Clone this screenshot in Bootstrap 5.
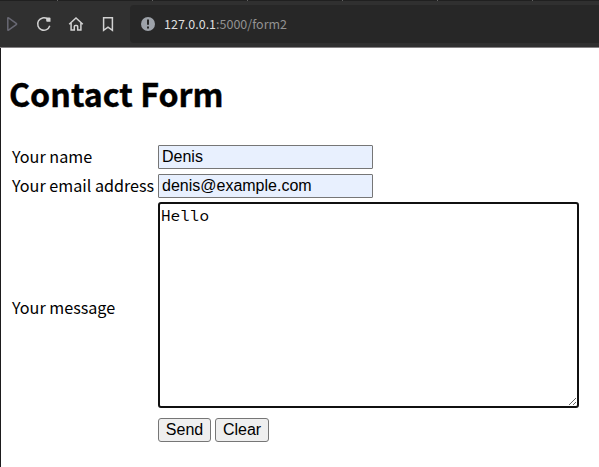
<!DOCTYPE html>
<html lang="en">
<head>
<meta charset="utf-8">
<meta name="viewport" content="width=device-width, initial-scale=1">
<title>Contact Form</title>
<link href="https://cdn.jsdelivr.net/npm/bootstrap@5.3.0/dist/css/bootstrap.min.css" rel="stylesheet">
<style>
body{font:16.15px/24px "Noto Sans CJK SC","Noto Sans",sans-serif;color:#000;background:#fff;height:467px;overflow:hidden}
.tabstrip{height:1px;background:repeating-linear-gradient(90deg,#202020 0 57px,#606060 57px 58px,#202020 58px 95px)}
.toolbar{height:47px;background:#303030;border-bottom:1px solid #858284;padding-left:4px}
.tool{width:16px;height:16px;fill:none;stroke:#d2d2d2;stroke-width:1.5;margin-right:16px;flex:none}
.tool.dim{stroke:#686873}
.address{height:38px;background:#272727;border-radius:4px 0 0 4px;font-size:12.5px;line-height:20px;color:#929292;padding-left:10px;margin-left:-2px}
.address svg{margin-right:8px}
.host{color:#dedede}
.page{height:419px;border-left:1px solid #1d1b1d;padding:26px 0 0 8px}
h1{font-size:32.2px;line-height:38px;font-weight:700;margin:0 0 33px;-webkit-text-stroke:.4px #000}
.fields{display:grid;grid-template-columns:146px 421px;grid-template-rows:25px 24px 206px 30px;padding-left:3px;row-gap:4px}
.fields label{white-space:nowrap;padding-bottom:2px}
.fields label.first{padding-bottom:4px}
.fields label.tall{padding:4px 0 0}
.field{width:215px;height:24px;padding:0 3px;font:16px/20px "Liberation Sans",Arial,sans-serif;color:#000;background:#e8f0fe;border:1px solid #767676;border-radius:1px}
.message{display:block;width:421px;height:206px;padding:1px;font:16px/20px "Source Code Pro","Noto Sans Mono CJK SC","DejaVu Sans Mono",monospace;color:#000;border:2px solid #101010;border-radius:3px;outline:0;resize:both}
.action{height:24px;padding:0;font:16px/20px "Liberation Sans",Arial,sans-serif;color:#000;background:#efefef;border:1px solid #767676;border-radius:3px}
.buttons{grid-column:2}
.send{width:53px}.clear{width:54px}
</style>
</head>
<body>
<div class="tabstrip"></div>
<header class="toolbar d-flex align-items-center">
<svg class="tool dim" viewBox="0 0 16 16"><path d="M3.8 2.2v11.6q0 .8.7.3l7.7-5.4q.8-.7 0-1.4L4.5 1.9q-.7-.5-.7.3z"/></svg>
<svg class="tool" viewBox="0 0 16 16"><path d="M13.8 9.8A6.2 6.2 0 1 1 11.5 3"/><path d="M10.2 1.5h3.3q1 0 1 1v3.3h-3.3q-1 0-1-1z" fill="#d2d2d2" stroke="none"/></svg>
<svg class="tool" viewBox="0 0 16 16"><path d="M1.2 8.2 8 1.9l6.8 6.3M3.1 7v7h3.2v-3.4q0-1 1-1h1.4q1 0 1 1V14h3.2V7"/></svg>
<svg class="tool" viewBox="0 0 16 16"><path d="M3.6 1.8h8.8v12.5L8 11.2l-4.4 3.1z"/></svg>
<div class="address d-flex align-items-center flex-grow-1">
<svg width="16" height="16" viewBox="0 0 16 16"><circle cx="8" cy="8" r="7" fill="#9da2a9"/><path d="M7 3.5h2v5.3H7zM7 10.4h2v2H7z" fill="#272727"/></svg>
<div><span class="host">127.0.0.1</span>:5000/form2</div>
</div>
</header>
<main class="page">
<h1>Contact Form</h1>
<form class="fields align-items-center">
<label for="name" class="first">Your name</label><input id="name" class="field align-self-start" value="Denis">
<label for="email">Your email address</label><input id="email" class="field" value="denis@example.com">
<label for="message" class="tall">Your message</label><textarea id="message" class="message" spellcheck="false">Hello</textarea>
<div class="buttons d-flex gap-1 align-self-end"><button type="button" class="action send">Send</button><button type="button" class="action clear">Clear</button></div>
</form>
</main>
<script src="https://cdn.jsdelivr.net/npm/bootstrap@5.3.0/dist/js/bootstrap.bundle.min.js"></script>
</body>
</html>
